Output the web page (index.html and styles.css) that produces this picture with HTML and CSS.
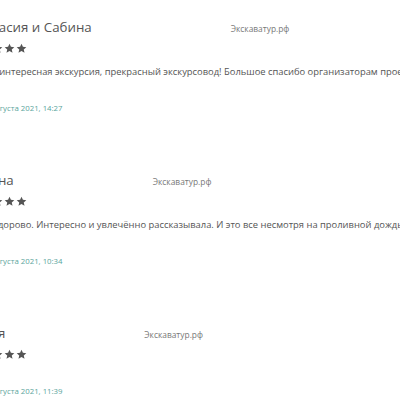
FILE: index.html
```html
<!DOCTYPE html>
<html lang="ru">
<head>
	<meta charset="UTF-8">
	<title>Отзывы</title>
	<link rel="stylesheet" href="styles.css">
</head>
<body>
<svg width="0" height="0" class="defs">
	<symbol id="star" viewBox="0 0 24 24">
		<path d="M12 1.5l3.1 6.9 7.4.7-5.6 5 1.7 7.4L12 17.6l-6.6 3.9 1.7-7.4-5.6-5 7.4-.7z"/>
	</symbol>
</svg>
<div class="reviews">
	<div class="review">
		<div class="review-head">
			<span class="review-name">Анастасия и Сабина</span>
			<span class="review-site">Экскаватур.рф</span>
		</div>
		<div class="stars">
			<svg><use href="#star"/></svg><svg><use href="#star"/></svg><svg><use href="#star"/></svg><svg><use href="#star"/></svg><svg><use href="#star"/></svg>
		</div>
		<p class="review-text">Очень интересная экскурсия, прекрасный экскурсовод! Большое спасибо организаторам проекта!</p>
		<div class="review-date">17 августа 2021, 14:27</div>
	</div>
	<div class="review">
		<div class="review-head">
			<span class="review-name">Марина</span>
			<span class="review-site">Экскаватур.рф</span>
		</div>
		<div class="stars">
			<svg><use href="#star"/></svg><svg><use href="#star"/></svg><svg><use href="#star"/></svg><svg><use href="#star"/></svg><svg><use href="#star"/></svg>
		</div>
		<p class="review-text">Было здорово. Интересно и увлечённо рассказывала. И это все несмотря на проливной дождь!</p>
		<div class="review-date">17 августа 2021, 10:34</div>
	</div>
	<div class="review">
		<div class="review-head">
			<span class="review-name">Мария</span>
			<span class="review-site">Экскаватур.рф</span>
		</div>
		<div class="stars">
			<svg><use href="#star"/></svg><svg><use href="#star"/></svg><svg><use href="#star"/></svg><svg><use href="#star"/></svg><svg><use href="#star"/></svg>
		</div>
		<div class="review-date">16 августа 2021, 11:39</div>
	</div>
</div>
</body>
</html>
```

FILE: styles.css
```css
body {
	margin: 0;
	background: #fff;
	overflow: hidden;
	font-family: 'Open Sans', 'Noto Sans', sans-serif;
	color: #555;
}
.defs {
	position: absolute;
}
.reviews {
	display: flex;
	flex-direction: column;
	gap: 56px;
	padding-top: 17px;
	margin-left: -42px;
	white-space: nowrap;
}
.review-head {
	display: flex;
	align-items: baseline;
	height: 20px;
	padding-left: 4px;
}
.review-name {
	font-size: 13.3px;
	line-height: 20px;
	color: #555;
}
.review-site {
	margin-left: 139px;
	font-size: 8.4px;
	color: #777;
}
.stars {
	display: flex;
	gap: 1px;
	height: 11px;
	margin: 6px 0 2px 10px;
}
.stars svg {
	width: 11px;
	height: 11px;
	fill: #555;
}
.review-text {
	margin: 10px 0 0;
	padding-left: 9px;
	font-size: 9.4px;
	line-height: 16px;
	color: #555;
}
.review-date {
	margin: 22px 0 0 22px;
	font-size: 7.8px;
	line-height: 12px;
	color: #5aa59c;
}
.stars + .review-date {
	margin-top: 25px;
}
```
